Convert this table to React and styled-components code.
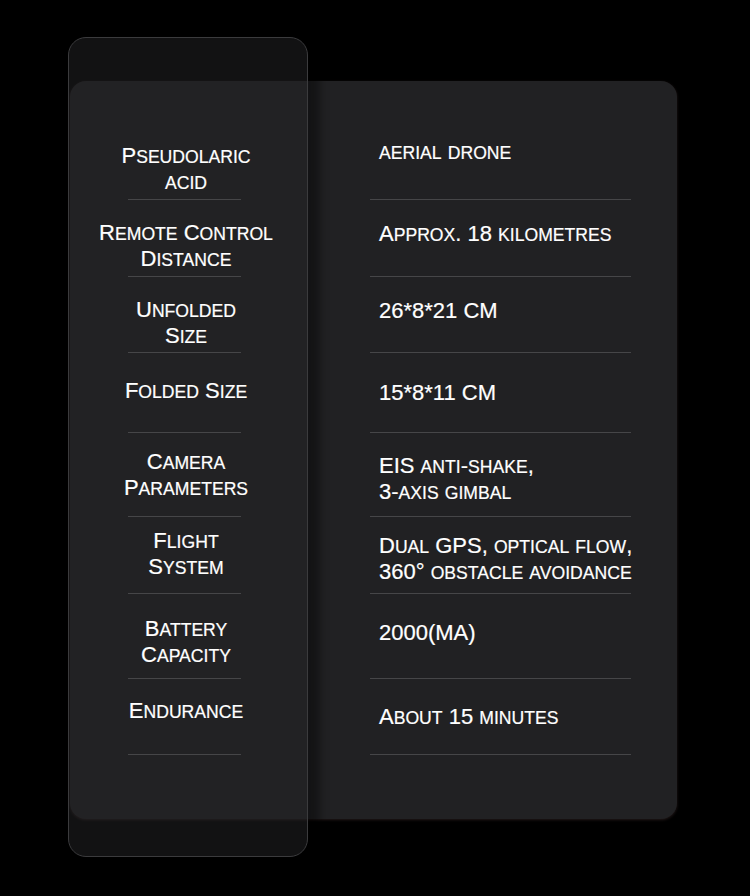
import React from "react";
import styled, { createGlobalStyle } from "styled-components";

const specs = [
  { h: 79, lp: 22, rp: 18, label: ["Pseudolaric", "acid"], value: ["aerial drone"] },
  { h: 77, lp: 20, rp: 21, label: ["Remote Control", "Distance"], value: ["Approx. 18 kilometres"] },
  { h: 76, lp: 20, rp: 21, label: ["Unfolded", "Size"], value: ["26*8*21 CM"] },
  { h: 80, lp: 25, rp: 27, label: ["Folded Size"], value: ["15*8*11 CM"] },
  { h: 84, lp: 16, rp: 20, label: ["Camera", "Parameters"], value: ["EIS anti-shake,", "3-axis gimbal"] },
  { h: 77, lp: 11, rp: 16, label: ["Flight", "System"], value: ["Dual GPS, optical flow,", "360° obstacle avoidance"] },
  { h: 85, lp: 22, rp: 26, label: ["Battery", "Capacity"], value: ["2000(MA)"] },
  { h: 76, lp: 19, rp: 25, label: ["Endurance"], value: ["About 15 minutes"] },
];

// lowercase runs are shown as smaller capitals
const SmallCaps = ({ text }) =>
  text.split(/([a-z]+)/).map((part, i) =>
    /^[a-z]+$/.test(part) ? <Low key={i}>{part}</Low> : part
  );

const App = () => {
  return (
    <Page>
      <GlobalStyle />
      <Panel>
        <Overlay />
        <Table>
          {specs.map((row) => (
            <Row key={row.label.join(" ")} h={row.h}>
              <LabelCell>
                <Label pad={row.lp}>
                  {row.label.map((line) => (
                    <Line key={line}>
                      <SmallCaps text={line} />
                    </Line>
                  ))}
                </Label>
                <LabelRule />
              </LabelCell>
              <ValueCell>
                <Value pad={row.rp}>
                  {row.value.map((line) => (
                    <Line key={line}>
                      <SmallCaps text={line} />
                    </Line>
                  ))}
                </Value>
                <ValueRule />
              </ValueCell>
            </Row>
          ))}
        </Table>
      </Panel>
    </Page>
  );
};

export default App;

const GlobalStyle = createGlobalStyle`
  html, body {
    margin: 0;
    background: #000;
  }
`;

const Page = styled.div`
  min-height: 896px;
  box-sizing: border-box;
  padding: 81px 0 0 70px;
  background: #000;
  font-family: "Liberation Sans", Arial, sans-serif;
`;

const Panel = styled.div`
  position: relative;
  width: 607px;
  box-sizing: border-box;
  padding: 40px 0 64px;
  background: #212123;
  border-radius: 16px;
  box-shadow: 0 1px 3px rgba(70, 50, 50, 0.5);
`;

const Overlay = styled.div`
  position: absolute;
  left: -2px;
  top: -44px;
  width: 240px;
  height: 820px;
  box-sizing: border-box;
  border: 1px solid #3b3b3d;
  border-radius: 18px;
  background: rgba(36, 36, 38, 0.5);
  box-shadow: 12px 0 8px rgba(0, 0, 0, 0.4);
  z-index: 0;
`;

const Table = styled.div`
  position: relative;
  z-index: 1;
  display: flex;
  flex-direction: column;
`;

const Row = styled.div`
  display: grid;
  grid-template-columns: 232px 1fr;
  height: ${(p) => p.h}px;
`;

const Cell = styled.div`
  display: flex;
  flex-direction: column;
  justify-content: space-between;
`;

const LabelCell = styled(Cell)``;
const ValueCell = styled(Cell)``;

const TextBlock = styled.div`
  padding-top: ${(p) => p.pad}px;
  color: #fff;
  font-size: 22px;
  line-height: 26.4px;
  white-space: nowrap;
  -webkit-text-stroke: 0.2px #fff;
`;

const Label = styled(TextBlock)`
  text-align: center;
`;

const Value = styled(TextBlock)`
  padding-left: 77px;
`;

const Line = styled.div``;

const Low = styled.span`
  font-size: 0.8em;
  line-height: 1;
  text-transform: uppercase;
`;

const Rule = styled.div`
  height: 1px;
  background: #464648;
`;

const LabelRule = styled(Rule)`
  margin-left: 58px;
  width: 113px;
`;

const ValueRule = styled(Rule)`
  margin-left: 68px;
  width: 261px;
`;
